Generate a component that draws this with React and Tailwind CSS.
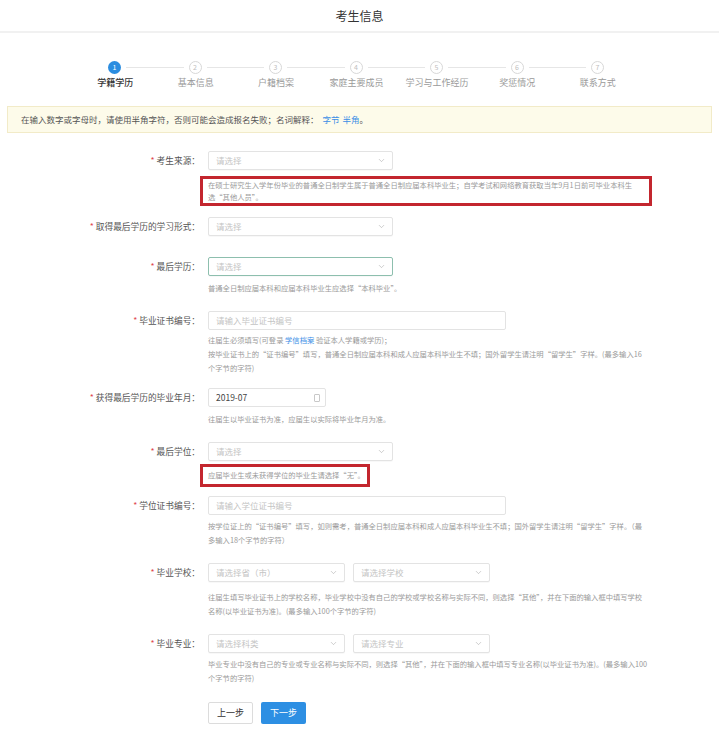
import { ChevronDown } from 'lucide-react';

const steps = ['学籍学历', '基本信息', '户籍档案', '家庭主要成员', '学习与工作经历', '奖惩情况', '联系方式'];

function Label({ children }) {
  return (
    <div className="w-[200px] shrink-0 text-right text-[8.7px] leading-[19px] text-[#555]">
      <span className="text-[#e0474c] mr-[2px]">*</span>
      {children}：
    </div>
  );
}

function Select({ placeholder = '请选择', width = 'w-[185px]', focused = false }) {
  return (
    <div
      className={`${width} h-[19px] flex items-center justify-between pl-[7px] pr-[6px] rounded-[2px] border bg-white shadow-[0_1px_1px_rgba(0,0,0,0.03)] ${
        focused ? 'border-[#8dbfae]' : 'border-[#e3e3e3]'
      }`}
    >
      <span className="text-[8.5px] text-[#c4c4c4]">{placeholder}</span>
      <ChevronDown size={9} strokeWidth={1.5} className="text-[#aaa]" />
    </div>
  );
}

function Input({ placeholder }) {
  return (
    <div className="w-[298px] h-[19px] flex items-center pl-[7px] rounded-[2px] border border-[#e3e3e3] bg-white">
      <span className="text-[8.5px] text-[#c4c4c4]">{placeholder}</span>
    </div>
  );
}

function Help({ className = '', children }) {
  return <div className={`w-[440px] text-[7.3px] leading-[14px] text-[#9a9a9a] ${className}`}>{children}</div>;
}

export default function App() {
  return (
    <div className="min-h-screen bg-white font-['Noto_Sans_CJK_SC','Liberation_Sans',sans-serif]">
      {/* 顶部标题 */}
      <header className="h-[33px] flex items-center justify-center border-b-2 border-[#f1f1f1]">
        <h1 className="text-[12px] text-[#333]">考生信息</h1>
      </header>

      {/* 步骤条 */}
      <div className="mt-[28px]">
        <div className="ml-[108px] w-[496px] flex items-center">
          {steps.map((s, i) => (
            <div key={s} className={`flex items-center ${i < steps.length - 1 ? 'flex-1' : ''}`}>
              <div
                className={`w-[13px] h-[13px] shrink-0 rounded-full flex items-center justify-center text-[7px] leading-none ${
                  i === 0 ? 'bg-[#2b8de0] text-white' : 'border border-[#d8d8d8] text-[#c0c0c0]'
                }`}
              >
                {i + 1}
              </div>
              {i < steps.length - 1 && <div className="flex-1 h-px bg-[#e6e6e6] mx-[5px]" />}
            </div>
          ))}
        </div>
        <div className="ml-[75px] w-[563px] grid grid-cols-7 mt-[3px]">
          {steps.map((s, i) => (
            <div
              key={s}
              className={`text-center text-[9px] leading-[12px] ${i === 0 ? 'text-[#333] font-medium' : 'text-[#9a9a9a]'}`}
            >
              {s}
            </div>
          ))}
        </div>
      </div>

      {/* 提示条 */}
      <div className="mx-[7px] mt-[17px] h-[27px] flex items-center pl-[13px] bg-[#fdfbea] border border-[#f2ebc8] text-[8.5px] text-[#555]">
        在输入数字或字母时，请使用半角字符，否则可能会造成报名失败；名词解释：
        <span className="text-[#3a8ee6] ml-[4px]">字节</span>
        <span className="text-[#3a8ee6] ml-[3px]">半角</span>。
      </div>

      {/* 表单 */}
      <div className="mt-[18px]">
        <div className="flex">
          <Label>考生来源</Label>
          <div className="ml-[8px]">
            <Select />
            <div className="mt-[6px] -ml-[8px] w-[452px] border-[3px] border-[#c3262e] pl-[5px] pr-[1px] text-[7.3px] leading-[12px] text-[#9a9a9a]">
              在硕士研究生入学年份毕业的普通全日制学生属于普通全日制应届本科毕业生；自学考试和网络教育获取当年9月1日前可毕业本科生选“其他人员”。
            </div>
          </div>
        </div>

        <div className="flex mt-[11px]">
          <Label>取得最后学历的学习形式</Label>
          <div className="ml-[8px]">
            <Select />
          </div>
        </div>

        <div className="flex mt-[21px]">
          <Label>最后学历</Label>
          <div className="ml-[8px]">
            <Select focused />
            <Help className="mt-[5px]">普通全日制应届本科和应届本科毕业生应选择“本科毕业”。</Help>
          </div>
        </div>

        <div className="flex mt-[16px]">
          <Label>毕业证书编号</Label>
          <div className="ml-[8px]">
            <Input placeholder="请输入毕业证书编号" />
            <Help className="mt-[3px] leading-[14.5px]">
              往届生必须填写(可登录 <span className="text-[#3a8ee6]">学信档案</span> 验证本人学籍或学历)；
              <br />
              按毕业证书上的“证书编号”填写，普通全日制应届本科和成人应届本科毕业生不填；国外留学生请注明“留学生”字样。(最多输入16个字节的字符)
            </Help>
          </div>
        </div>

        <div className="flex mt-[13px]">
          <Label>获得最后学历的毕业年月</Label>
          <div className="ml-[8px]">
            <div className="w-[118px] h-[19px] flex items-center justify-between pl-[7px] pr-[5px] rounded-[2px] border border-[#e3e3e3]">
              <span className="text-[8.5px] text-[#444]">2019-07</span>
              <div className="w-[6px] h-[8px] rounded-[1px] border border-[#c8c8c8]" />
            </div>
            <Help className="mt-[5px]">往届生以毕业证书为准，应届生以实际将毕业年月为准。</Help>
          </div>
        </div>

        <div className="flex mt-[16px]">
          <Label>最后学位</Label>
          <div className="ml-[8px]">
            <Select />
            <div className="mt-[3px] -ml-[8px] w-[170px] border-[3px] border-[#c3262e] pl-[5px] whitespace-nowrap text-[7.3px] leading-[17px] text-[#9a9a9a]">
              应届毕业生或未获得学位的毕业生请选择“无”。
            </div>
          </div>
        </div>

        <div className="flex mt-[9px]">
          <Label>学位证书编号</Label>
          <div className="ml-[8px]">
            <Input placeholder="请输入学位证书编号" />
            <Help className="mt-[4px]">
              按学位证上的“证书编号”填写，如则需考，普通全日制应届本科和成人应届本科毕业生不填；国外留学生请注明“留学生”字样。（最多输入18个字节的字符）
            </Help>
          </div>
        </div>

        <div className="flex mt-[16px]">
          <Label>毕业学校</Label>
          <div className="ml-[8px]">
            <div className="flex gap-[8px]">
              <Select placeholder="请选择省（市）" width="w-[137px]" />
              <Select placeholder="请选择学校" width="w-[137px]" />
            </div>
            <Help className="mt-[8px]">
              往届生填写毕业证书上的学校名称，毕业学校中没有自己的学校或学校名称与实际不同，则选择“其他”，并在下面的输入框中填写学校名称(以毕业证书为准)。(最多输入100个字节的字符)
            </Help>
          </div>
        </div>

        <div className="flex mt-[16px]">
          <Label>毕业专业</Label>
          <div className="ml-[8px]">
            <div className="flex gap-[8px]">
              <Select placeholder="请选择科类" width="w-[137px]" />
              <Select placeholder="请选择专业" width="w-[137px]" />
            </div>
            <Help className="mt-[4px]">
              毕业专业中没有自己的专业或专业名称与实际不同，则选择“其他”，并在下面的输入框中填写专业名称(以毕业证书为准)。(最多输入100个字节的字符)
            </Help>
          </div>
        </div>

        {/* 按钮 */}
        <div className="flex mt-[17px] pb-[6px]">
          <div className="w-[200px] shrink-0" />
          <div className="ml-[8px] flex gap-[8px]">
            <button className="w-[45px] h-[22px] rounded-[2px] border border-[#dcdcdc] bg-white text-[9px] text-[#333]">
              上一步
            </button>
            <button className="w-[45px] h-[22px] rounded-[2px] bg-[#2d8fe3] text-[9px] text-white">下一步</button>
          </div>
        </div>
      </div>
    </div>
  );
}
